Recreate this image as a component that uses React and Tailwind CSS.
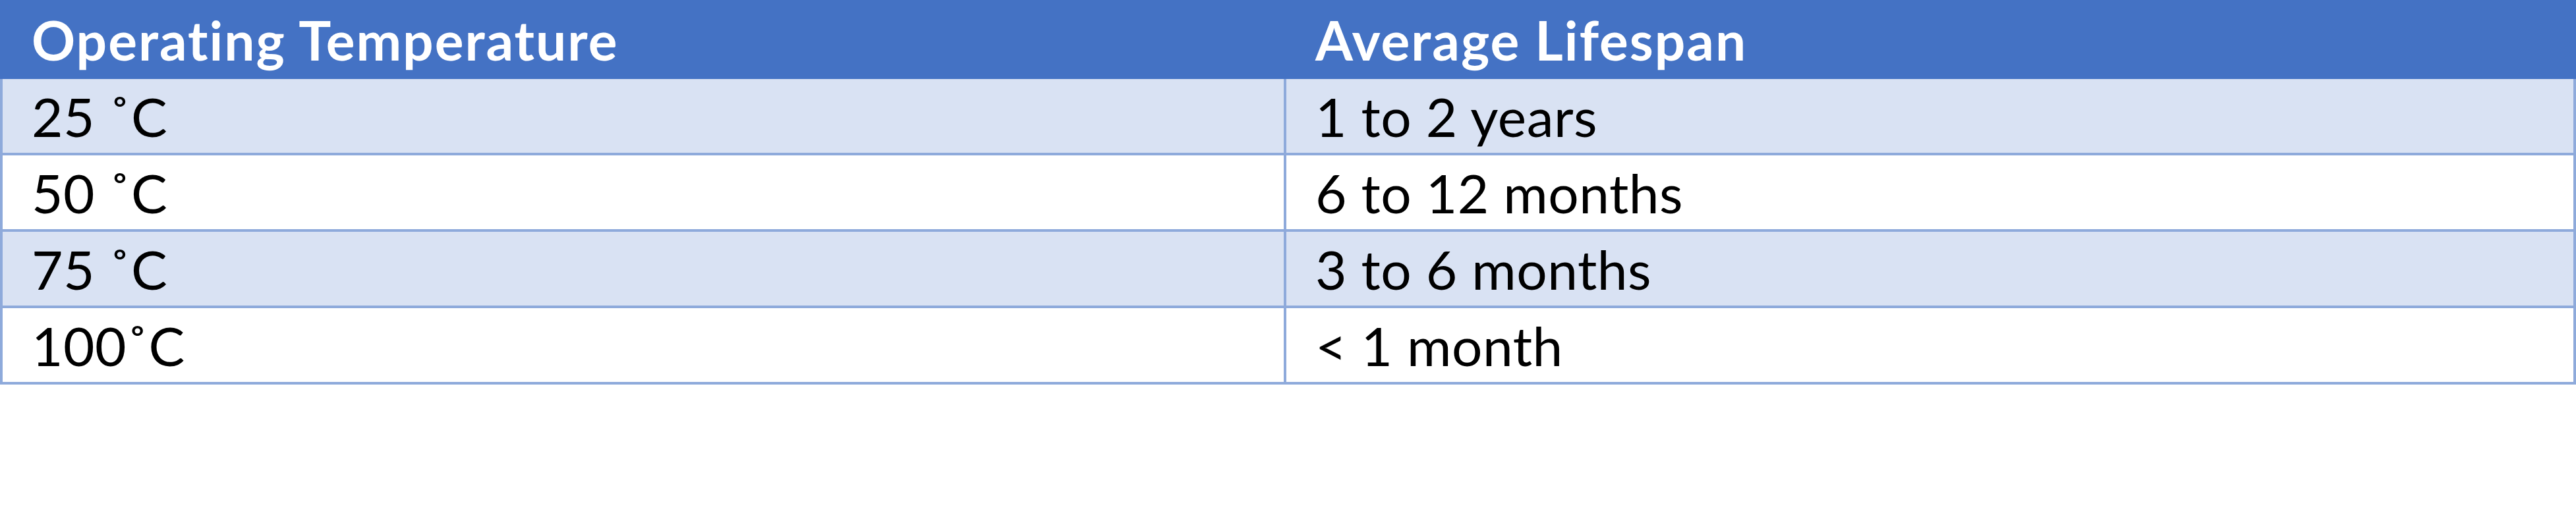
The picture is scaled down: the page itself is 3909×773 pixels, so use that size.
import React from 'react';

const rows = [
  ['25 ˚C', '1 to 2 years'],
  ['50 ˚C', '6 to 12 months'],
  ['75 ˚C', '3 to 6 months'],
  ['100˚C', '< 1 month'],
];

const App = () => {
  return (
    <div
      className="w-[3909px] h-[773px] bg-white"
      style={{ fontFamily: 'Lato, "Open Sans", sans-serif', fontVariantLigatures: 'none' }}
    >
      <div className="grid grid-cols-[1952px_1fr] h-[120px] bg-[#4472C4] text-white font-bold text-[82px] leading-[120px] tracking-[2px]">
        <div className="pl-[48px]">Operating Temperature</div>
        <div className="pl-[44px]">Average Lifespan</div>
      </div>
      {rows.map(([temp, life], i) => (
        <div
          key={temp}
          className={`grid grid-cols-[1948px_1fr] h-[116px] border-x-4 border-b-4 border-[#8EAADB] text-black text-[82px] leading-[112px] tracking-[0.5px] ${
            i % 2 === 0 ? 'bg-[#D9E2F3]' : 'bg-white'
          }`}
        >
          <div className="pl-[44px] border-r-4 border-[#8EAADB]">{temp}</div>
          <div className="pl-[44px]">{life}</div>
        </div>
      ))}
    </div>
  );
};

export default App;
